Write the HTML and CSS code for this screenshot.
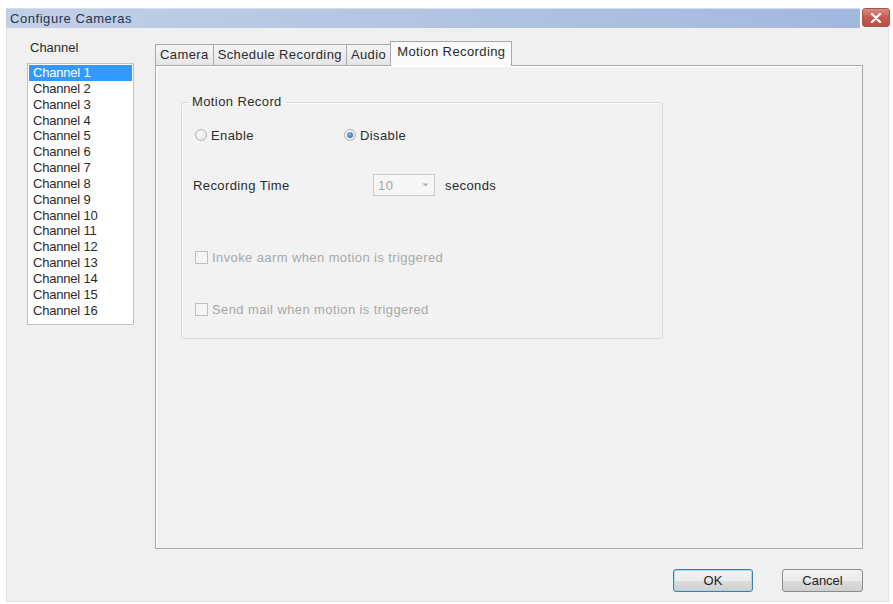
FILE: index.html
```html
<!DOCTYPE html>
<html>
<head>
<meta charset="utf-8">
<link rel="stylesheet" href="styles.css">
</head>
<body>
<div class="window">
  <div class="titlebar">
    <div class="title-area"><span class="title">Configure Cameras</span></div>
    <div class="close">
      <svg width="12" height="10" viewBox="0 0 12 10"><path d="M2 1 L10 9 M10 1 L2 9" stroke="#fff" stroke-width="2.4" stroke-linecap="round"/></svg>
    </div>
  </div>
  <div class="win-body">
    <div class="main">
      <div class="left">
        <div class="lbl">Channel</div>
        <ul class="list">
          <li class="sel">Channel 1</li>
          <li>Channel 2</li>
          <li>Channel 3</li>
          <li>Channel 4</li>
          <li>Channel 5</li>
          <li>Channel 6</li>
          <li>Channel 7</li>
          <li>Channel 8</li>
          <li>Channel 9</li>
          <li>Channel 10</li>
          <li>Channel 11</li>
          <li>Channel 12</li>
          <li>Channel 13</li>
          <li>Channel 14</li>
          <li>Channel 15</li>
          <li>Channel 16</li>
        </ul>
      </div>
      <div class="right">
        <div class="tabs">
          <div class="tab">Camera</div>
          <div class="tab">Schedule Recording</div>
          <div class="tab">Audio</div>
          <div class="tab active">Motion Recording</div>
        </div>
        <div class="panel">
          <fieldset class="group">
            <legend>Motion Record</legend>
            <div class="row radios">
              <label class="opt"><span class="radio"></span>Enable</label>
              <label class="opt"><span class="radio on"></span>Disable</label>
            </div>
            <div class="row rec">
              <span class="rec-label">Recording Time</span>
              <span class="combo"><span class="combo-val">10</span><span class="combo-arrow">
                <svg width="7" height="4" viewBox="0 0 7 4"><path d="M0.5 0.5 L3.5 3.5 L6.5 0.5 Z" fill="#b0b0b0"/></svg>
              </span></span>
              <span class="unit">seconds</span>
            </div>
            <div class="row chk first"><span class="box"></span>Invoke aarm when motion is triggered</div>
            <div class="row chk"><span class="box"></span>Send mail when motion is triggered</div>
          </fieldset>
        </div>
      </div>
    </div>
    <div class="footer">
      <button class="btn default">OK</button>
      <button class="btn">Cancel</button>
    </div>
  </div>
</div>
</body>
</html>
```
FILE: styles.css
```css
html, body {
  margin: 0;
  padding: 0;
  background: #ffffff;
}
body {
  font-family: "Liberation Sans", Arial, sans-serif;
  font-size: 13px;
  color: #2b2b2b;
}
.window {
  margin: 8px 0 0 6px;
  width: 884px;
}
.titlebar {
  display: flex;
  height: 20px;
}
.title-area {
  flex: 1;
  background: linear-gradient(to right, #c2d0e7 0%, #b3c4e2 50%, #a3b8df 100%);
  border-top: 1px solid #d4e0f0;
  display: flex;
  align-items: center;
  padding-left: 4px;
}
.title {
  font-size: 13px;
  letter-spacing: 0.55px;
  color: #223552;
}
.close {
  width: 28px;
  height: 19px;
  margin-left: 2px;
  background: linear-gradient(#d98a80, #c75a50 50%, #bb4e44);
  border: 1px solid #a8554c;
  border-radius: 3px;
  box-sizing: border-box;
  display: flex;
  align-items: center;
  justify-content: center;
}
.win-body {
  width: 883px;
  height: 574px;
  box-sizing: border-box;
  background: #f0f0f0;
  border-left: 1px solid #e2e2e2;
  border-right: 1px solid #e2e2e2;
  border-bottom: 1px solid #e4e4e4;
  padding: 13px 25px 0 20px;
}
.main {
  display: flex;
  gap: 21px;
}
.left {
  width: 107px;
}
.lbl {
  line-height: 14px;
  margin-left: 3px;
}
.list {
  list-style: none;
  margin: 8px 0 0 0;
  padding: 1px 0 0 0;
  height: 262px;
  box-sizing: border-box;
  background: #ffffff;
  border: 1px solid #c2c2c2;
}
.list li {
  line-height: 15.85px;
  height: 15.85px;
  padding-left: 4px;
  margin: 0 1px;
  white-space: nowrap;
  letter-spacing: -0.2px;
}
.list li.sel {
  background: #3399ff;
  color: #ffffff;
}
.right {
  width: 708px;
  letter-spacing: 0.4px;
}
.tabs {
  display: flex;
  height: 24px;
  align-items: flex-end;
  position: relative;
  z-index: 1;
}
.tab {
  height: 21px;
  box-sizing: border-box;
  padding: 0 4px;
  line-height: 19px;
  border: 1px solid #a9a9a9;
  border-bottom: none;
  border-right: none;
  background: linear-gradient(#f4f4f4, #e6e6e6);
  white-space: nowrap;
}
.tab.active {
  height: 25px;
  margin-bottom: -1px;
  background: #fafafa;
  border: 1px solid #a9a9a9;
  border-bottom: none;
  padding: 0 6px 0 6px;
  line-height: 20px;
}
.panel {
  height: 484px;
  box-sizing: border-box;
  border: 1px solid #a9a9a9;
  background: #f2f2f2;
  box-shadow: inset 1px 1px 0 #ffffff;
  padding: 28px 0 0 25px;
}
.group {
  width: 482px;
  height: 245px;
  box-sizing: border-box;
  margin: 0;
  padding: 0 0 0 13px;
  border: 1px solid #dadada;
  border-radius: 3px;
  box-shadow: inset 1px 1px 0 #fbfbfb;
}
.group legend {
  margin-left: -6px;
  padding: 0 3px;
  line-height: 16px;
}
.row {
  display: flex;
  align-items: center;
}
.radios {
  margin-top: 17px;
  height: 16px;
}
.opt {
  display: flex;
  align-items: center;
}
.opt:first-child {
  width: 149px;
}
.radio {
  width: 12px;
  height: 12px;
  box-sizing: border-box;
  border-radius: 50%;
  border: 1px solid #b5b5b5;
  background: radial-gradient(circle at 40% 40%, #ffffff, #dcdcdc);
  margin-right: 4px;
  position: relative;
}
.radio.on::after {
  content: "";
  position: absolute;
  left: 2px;
  top: 2px;
  width: 6px;
  height: 6px;
  border-radius: 50%;
  background: radial-gradient(circle at 40% 35%, #7fb4e6, #2a5f9e);
}
.rec {
  margin-top: 31px;
  height: 22px;
  margin-left: -2px;
}
.rec-label {
  width: 180px;
}
.combo {
  width: 62px;
  height: 22px;
  box-sizing: border-box;
  border: 1px solid #cacaca;
  background: #f6f6f6;
  display: flex;
  align-items: center;
  color: #a6a6a6;
  padding-left: 4px;
}
.combo-val {
  flex: 1;
}
.combo-arrow {
  width: 18px;
  display: flex;
  justify-content: center;
}
.unit {
  margin-left: 10px;
}
.chk {
  height: 16px;
  color: #a8a8a8;
}
.chk.first {
  margin-top: 53px;
}
.chk + .chk {
  margin-top: 36px;
}
.box {
  width: 13px;
  height: 13px;
  box-sizing: border-box;
  border: 1px solid #c0c0c0;
  background: #f5f5f5;
  margin-right: 4px;
}
.footer {
  display: flex;
  justify-content: flex-end;
  gap: 29px;
  margin-top: 20px;
}
.btn {
  font-family: "Liberation Sans", Arial, sans-serif;
  font-size: 13px;
  color: #222222;
  width: 81px;
  height: 23px;
  border: 1px solid #8c8c8c;
  border-radius: 3px;
  background: linear-gradient(#f4f4f4, #ebebeb 50%, #dddddd 51%, #cfcfcf);
  padding: 0;
}
.btn.default {
  width: 80px;
  border-color: #3c7fb1;
  box-shadow: inset 0 0 0 1px #a8d8f0;
}
```
